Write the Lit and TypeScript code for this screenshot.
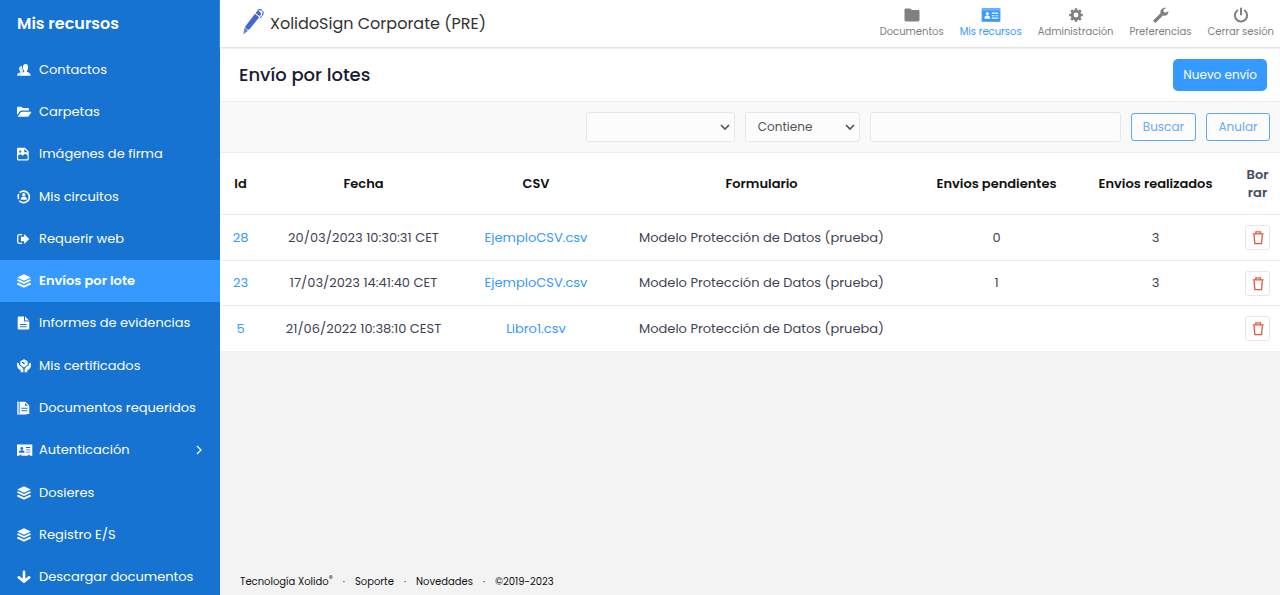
import { LitElement, html, css, svg, nothing } from "lit";
import { customElement, property } from "lit/decorators.js";
import { classMap } from "lit/directives/class-map.js";

const icons: Record<string, unknown> = {
  contacts: svg`
    <path opacity=".85" d="M0 14.500c0-2.500 1.200-2.900 3.300-3.700.5-.3.4-1 .1-1.400C1.700 7.600 2 3.300 5.500 3.100L7 9l-2 5.500z"/>
    <path d="M4.300 14.500c.1-2.800 1.200-3.200 3.600-4.200.6-.3.5-1.200.2-1.700C6.100 6 6.200 1 9.800 1s3.700 5 1.700 7.600c-.3.500-.4 1.400.2 1.700 2.500 1 3.700 1.400 3.900 4.200z"/>`,
  folderOpen: svg`
    <path d="M0 11.500V3.200c0-.7.5-1.200 1.200-1.200h3.600c.5 0 .8.2 1 .6l.5.900h6.200c.7 0 1.200.5 1.200 1.200v1.500H5.300c-1 0-1.700.4-2.300 1.200z"/>
    <path d="M.6 13.500 4.100 8.600c.4-.6.9-.9 1.600-.9h9.900c.6 0 .9.500.6 1l-2.500 3.700c-.4.700-1 1.100-1.800 1.100z"/>`,
  imageFile: svg`
    <path fill-rule="evenodd" d="M1.200.8h8l4.200 4.300V14c0 .8-.5 1.300-1.300 1.300H1.300C.5 15.300 0 14.800 0 14V2C0 1.300.5.800 1.200.8zM8.300 2.200v3.700h3.900zM3.700 4a1.300 1.300 0 1 0 0 2.600A1.300 1.300 0 0 0 3.700 4zM1.300 9.500V14h10.800V9.400L9.300 7.600 6.200 10 4.400 8.200z"/>`,
  circuit: svg`
    <path fill="none" stroke="currentColor" stroke-width="1.900" d="M3 3.100A6.600 6.600 0 1 1 2.600 12.300M1.800 10.500A6.600 6.600 0 0 1 2 4.500"/>
    <circle cx="7.800" cy="5.300" r="1.900"/><path d="M4.300 11.200c0-2.600 1-3.700 3.500-3.700s3.500 1.100 3.500 3.700z"/>`,
  exit: svg`
    <path fill="none" stroke="currentColor" stroke-width="1.500" d="M6 3H2.800C1.500 3 .8 3.700.8 5v6c0 1.300.7 2 2 2H6"/>
    <path d="M4.500 5.500h3.700V2.300L14 8l-5.800 5.700v-3.200H4.500z"/>`,
  layers: svg`
    <path d="M8 .4 15.800 4 8 7.700.2 4z"/>
    <path d="m.2 6.600 1.300-.7L8 9l6.500-3.100 1.300.7v1.200L8 11.500.2 7.800z"/>
    <path d="m.2 10.700 1.300-.7L8 13.100l6.500-3.100 1.300.7v1.200L8 15.600.2 11.900z"/>`,
  document: svg`
    <path fill-rule="evenodd" d="M1.800.6h6.200v5.600h6V14.300c0 .6-.4 1-1 1H1.800c-.6 0-1-.4-1-1V1.600c0-.6.400-1 1-1zm1.700 8.400v1.200h7.500V9zm0 2.600v1.200h7.500v-1.200z"/>
    <path d="M9.200.6v4.400h4.600z"/>`,
  certificate: svg`
    <path d="M8 .3 12.200 2.700v3.800L8 9.600 3.800 6.500V2.700z"/>
    <path fill="#1673d2" d="m5.200 3.700 1.500-.8 2.600 2.600-1.400.9zM9.500 2.600l1.400.8-.9.900z"/>
    <path d="M.1 4.300c1.600-.1 2.300.7 2.400 2.800L4.800 8.700c2 1.400 2.700 2.600 2.600 6.400H4.300v-2C2.100 11.500.2 10.200.1 7.600zM15.900 4.300c-1.600-.1-2.300.7-2.400 2.800l-2.300 1.600c-2 1.400-2.700 2.600-2.600 6.400h3.100v-2c2.200-1.600 4.100-2.900 4.200-5.500z"/>`,
  documents: svg`
    <path opacity=".7" d="M0 .6h2.400v13.600H11v1.500H1.200c-.7 0-1.200-.5-1.200-1.200z"/>
    <path fill-rule="evenodd" d="M3 .8h6.600L14 5.200v9.600H3zm6.300 1.500v3.200h3.200zM5 7.600v1.200h7V7.600zm0 2.900v1.200h7v-1.200z"/>`,
  idCard: svg`
    <path fill-rule="evenodd" d="M0 1.800h17.500v12.700h-2.900v-1h-2v1H5v-1H3v1H0zM5.500 4.500a1.700 1.700 0 1 0 0 3.400 1.700 1.700 0 0 0 0-3.400zM2.300 11h6.400c0-1.900-.9-2.800-3.200-2.800S2.300 9.100 2.300 11zM10.200 4.700v1h5v-1zm0 2.600v1h5v-1zm0 2.600v1h5v-1z"/>`,
  down: svg`
    <path fill="none" stroke="currentColor" stroke-width="3" stroke-linecap="round" d="M8 2v10M2 8.400 8 13.100l6-4.700"/>`,
  folder: svg`<path d="M.5 3c0-.8.6-1.400 1.400-1.400h3.800c.6 0 1 .2 1.400.7l.7.800h6.300c.8 0 1.400.6 1.400 1.400V13c0 .8-.6 1.400-1.400 1.400H1.900C1.100 14.400.5 13.800.5 13z"/>`,
  resources: svg`
    <rect x="-1.500" y=".9" width="19" height="14.200" rx="1.200" opacity=".75"/>
    <rect x="-.7" y="3.700" width="17.400" height="10.500"/>
    <g fill="#fff"><circle cx="4.300" cy="6.700" r="1.600"/><path d="M1.400 11.800c0-2 1-3.200 2.900-3.200s2.900 1.200 2.900 3.200zM8.800 5.600h6.500v1.200H8.800zM8.800 8.200h2.700v1.100H8.800zM12.500 8.200h2.800v1.100h-2.800zM8.800 10.600h6.500v1.200H8.800z"/></g>`,
  gear: svg`
    <path stroke="currentColor" stroke-width="2.600" d="M8 1.200v3M8 11.800v3M1.200 8h3M11.800 8h3M3.200 3.200l2 2M10.800 10.800l2 2M3.200 12.800l2-2M10.800 5.200l2-2"/>
    <circle cx="8" cy="8" r="3.800" fill="none" stroke="currentColor" stroke-width="2.800"/>`,
  wrench: svg`
    <path fill-rule="evenodd" d="M15.200 4.200 12.500 5.800 10.600 4.700V2.600L13.300 1C10.200.1 6.800 2.500 7.500 6.200L.9 12.800c-1.500 1.600.8 3.900 2.400 2.400l6.600-6.600c3.600.6 6.100-1.700 5.300-4.400z"/>`,
  power: svg`
    <path fill="none" stroke="currentColor" stroke-width="2" stroke-linecap="round" d="M8 1.500v6M4.300 3.500a6.100 6.100 0 1 0 7.400 0"/>`,
  trash: svg`
    <g fill="none" stroke="currentColor"><path stroke-width="1.300" d="M3 4.200h11.500M6.200 3.800V1.900h5v1.900"/><path stroke-width="1.400" d="m4.300 4.700.9 9.900h7.100l.9-9.900"/></g>`,
};

@customElement("x-icon")
class XIcon extends LitElement {
  @property() name = "";
  static styles = css`
    :host { display: inline-flex; width: 16px; height: 16px; flex: none; }
    svg { width: 100%; height: 100%; overflow: visible; fill: currentColor; }
  `;
  render() {
    return html`<svg viewBox="0 0 16 16" aria-hidden="true">${icons[this.name]}</svg>`;
  }
}

const menu = [
  { icon: "contacts", text: "Contactos" },
  { icon: "folderOpen", text: "Carpetas" },
  { icon: "imageFile", text: "Imágenes de firma" },
  { icon: "circuit", text: "Mis circuitos" },
  { icon: "exit", text: "Requerir web" },
  { icon: "layers", text: "Envíos por lote", active: true },
  { icon: "document", text: "Informes de evidencias" },
  { icon: "certificate", text: "Mis certificados" },
  { icon: "documents", text: "Documentos requeridos" },
  { icon: "idCard", text: "Autenticación", nested: true },
  { icon: "layers", text: "Dosieres" },
  { icon: "layers", text: "Registro E/S" },
  { icon: "down", text: "Descargar documentos" },
];

const sections = [
  { icon: "folder", text: "Documentos" },
  { icon: "resources", text: "Mis recursos", active: true },
  { icon: "gear", text: "Administración" },
  { icon: "wrench", text: "Preferencias" },
  { icon: "power", text: "Cerrar sesión" },
];

const rows = [
  { id: 28, date: "20/03/2023 10:30:31 CET", csv: "EjemploCSV.csv", form: "Modelo Protección de Datos (prueba)", pending: "0", done: "3" },
  { id: 23, date: "17/03/2023 14:41:40 CET", csv: "EjemploCSV.csv", form: "Modelo Protección de Datos (prueba)", pending: "1", done: "3" },
  { id: 5, date: "21/06/2022 10:38:10 CEST", csv: "Libro1.csv", form: "Modelo Protección de Datos (prueba)", pending: "", done: "" },
];

@customElement("app-root")
class AppRoot extends LitElement {
  static styles = css`
    :host {
      display: grid;
      grid-template-columns: 220px minmax(0, 1fr);
      height: 100vh;
      overflow: hidden;
      font: 13px/20px Poppins, Inter, "Open Sans", sans-serif;
      color: #3f4254;
      background: #f3f3f3;
    }
    *, *::before { box-sizing: border-box; }
    a { color: #3699ff; text-decoration: none; }
    button, select, input { font: inherit; margin: 0; }

    .sidebar { background: #1673d2; color: #fff; overflow: hidden; }
    .sidebar h2 { margin: 0; padding: 0 17px; font-size: 16px; line-height: 48px; font-weight: 600; }
    .menu { list-style: none; margin: 0; padding: 0; min-height: 550px; display: grid; grid-auto-rows: 1fr; }
    .menu a { height: 100%; padding: 1px 16px 0 17px; display: flex; align-items: center; gap: 8px; color: #fff; white-space: nowrap; }
    .menu x-icon { width: 14px; height: 14px; }
    .menu .active { background: #3699ff; font-weight: 600; }
    .chevron { width: 10px; height: 10px; margin-left: auto; fill: none; stroke: currentColor; stroke-width: 1.2; }

    .content { display: flex; flex-direction: column; min-width: 0; }
    .topbar { height: 48px; background: #fff; border-bottom: 1px solid #e4e4e6; box-shadow: 0 1px 1px #f0f0f0; display: flex; align-items: center; justify-content: space-between; padding: 0 6px 0 22px; z-index: 1; }
    .brand { display: flex; align-items: center; gap: 6px; padding-top: 1px; font-size: 16px; color: #333; white-space: nowrap; }
    .brand svg { width: 22px; height: 26px; margin-bottom: 4px; }
    .sections { display: flex; gap: 16px; }
    .sections a { display: flex; flex-direction: column; align-items: center; gap: 1px; font-size: 10px; line-height: 16px; color: #808080; white-space: nowrap; }
    .sections .active { color: #3699ff; }

    .titlebar { height: 54px; background: #fff; border-bottom: 1px solid #ebedf3; display: flex; align-items: center; justify-content: space-between; padding: 0 13px 0 19px; }
    h1 { margin: 0; font-size: 18px; font-weight: 500; color: #181c32; }
    .primary { height: 32px; padding: 1px 10px 0; border: 0; border-radius: 5px; background: #3699ff; color: #fff; font-size: 12px; }

    .filters { height: 51px; background: #f9f9f9; border-bottom: 1px solid #ebedf3; display: flex; align-items: center; justify-content: flex-end; gap: 10px; padding: 0 10px; font-size: 12px; }
    .field { height: 30px; border: 1px solid #e4e8ea; border-radius: 3px; background-color: #fcfcfc; color: #555; padding: 0 12px; }
    select.field {
      appearance: none;
      background-image: url("data:image/svg+xml,%3Csvg xmlns='http://www.w3.org/2000/svg' viewBox='0 0 10 8'%3E%3Cpath d='M1 2l4 4 4-4' fill='none' stroke='%23555' stroke-width='1.7'/%3E%3C/svg%3E");
      background-size: 10px 8px;
      background-repeat: no-repeat;
      background-position: right 4px center;
    }
    .column { width: 149px; }
    .operator { width: 115px; }
    .term { width: 251px; }
    .outline { height: 28px; min-width: 64px; padding: 0 11px; border: 1px solid #5ca8f2; border-radius: 3px; background: #fcfcfc; color: #6cabef; }

    table { width: 100%; table-layout: fixed; border-collapse: separate; border-spacing: 0; background: #fff; text-align: center; }
    th, td { padding: 0; border-bottom: 1px solid #ebedf3; }
    th { height: 62px; line-height: 18px; font-weight: 600; color: #111; }
    td { height: 45px; }
    tbody tr:first-child td { height: 46px; }
    tbody tr:last-child td { border-bottom: 0; }
    .c-id { width: 41px; }
    .c-date { width: 205px; }
    .c-csv { width: 140px; }
    .c-count { width: 15%; }
    .c-delete { width: 45px; }
    .soft { color: #464e5f; padding: 0 10px; word-break: break-all; }
    .delete { width: 25px; height: 25px; padding: 0; border: 1px solid #e4e8ea; border-radius: 3px; background: #fff; color: #e5573f; display: inline-flex; align-items: center; justify-content: center; vertical-align: middle; }
    .delete x-icon { width: 15px; height: 15px; }

    footer { margin-top: auto; padding: 0 20px 3px; font-size: 10px; color: #111; display: flex; gap: 10px; }
    footer a { color: inherit; }
    sup { font-size: 8px; line-height: 0; }
  `;

  render() {
    return html`
      <aside class="sidebar">
        <h2>Mis recursos</h2>
        <nav>
          <ul class="menu">
            ${menu.map((m) => html`<li>
              <a href="#" class=${classMap({ active: !!m.active })}>
                <x-icon name=${m.icon}></x-icon><span>${m.text}</span>
                ${m.nested ? html`<svg class="chevron" viewBox="0 0 10 10" aria-hidden="true"><path d="m3 1 4 4-4 4" /></svg>` : nothing}
              </a></li>`)}
          </ul>
        </nav>
      </aside>
      <div class="content">
        <header class="topbar">
          <div class="brand">
            <svg viewBox="1.500 0 22 28" aria-hidden="true" fill="#4665d4">
              <path d="M2 27.500 3.500 20 7 23.300z" opacity=".85" />
              <path d="M4 19 14.600 5.200 19.200 9 8.200 22.300c-1.200.6-4.400-1.800-4.200-3.300z" />
              <path d="m15.300 4.300 1.300-1.600c1.300-1.600 5.500 1.500 4.300 3.400l-1.200 1.800z" />
              <path d="M17.500 1.500c3-2 6.700.3 5.700 3.700-.5 1.700-1.700 3-2.700 4.300" fill="none" stroke="#4665d4" stroke-width="1.300" stroke-dasharray="5 1" />
            </svg>
            <span>XolidoSign Corporate (PRE)</span>
          </div>
          <nav class="sections">
            ${sections.map((s) => html`<a href="#" class=${classMap({ active: !!s.active })}><x-icon name=${s.icon}></x-icon>${s.text}</a>`)}
          </nav>
        </header>
        <main>
          <div class="titlebar">
            <h1>Envío por lotes</h1>
            <button class="primary" type="button">Nuevo envío</button>
          </div>
          <form class="filters" @submit=${(e: Event) => e.preventDefault()}>
            <select class="field column" aria-label="Campo"><option></option><option>Id</option><option>Fecha</option><option>CSV</option><option>Formulario</option></select>
            <select class="field operator" aria-label="Condición"><option>Contiene</option></select>
            <input class="field term" type="text" aria-label="Texto" />
            <button class="outline" type="submit">Buscar</button>
            <button class="outline" type="reset">Anular</button>
          </form>
          <table>
            <colgroup>
              <col class="c-id" /><col class="c-date" /><col class="c-csv" /><col />
              <col class="c-count" /><col class="c-count" /><col class="c-delete" />
            </colgroup>
            <thead>
              <tr>
                <th>Id</th><th>Fecha</th><th>CSV</th><th>Formulario</th>
                <th>Envios pendientes</th><th>Envios realizados</th><th class="soft">Borrar</th>
              </tr>
            </thead>
            <tbody>
              ${rows.map((r) => html`<tr>
                <td><a href="#">${r.id}</a></td>
                <td>${r.date}</td>
                <td><a href="#">${r.csv}</a></td>
                <td>${r.form}</td>
                <td>${r.pending}</td>
                <td>${r.done}</td>
                <td><button class="delete" type="button" aria-label="Borrar"><x-icon name="trash"></x-icon></button></td>
              </tr>`)}
            </tbody>
          </table>
        </main>
        <footer>
          <a href="#">Tecnología Xolido<sup>®</sup></a><span>·</span>
          <a href="#">Soporte</a><span>·</span>
          <a href="#">Novedades</a><span>·</span>
          <span>©2019-2023</span>
        </footer>
      </div>
    `;
  }
}
